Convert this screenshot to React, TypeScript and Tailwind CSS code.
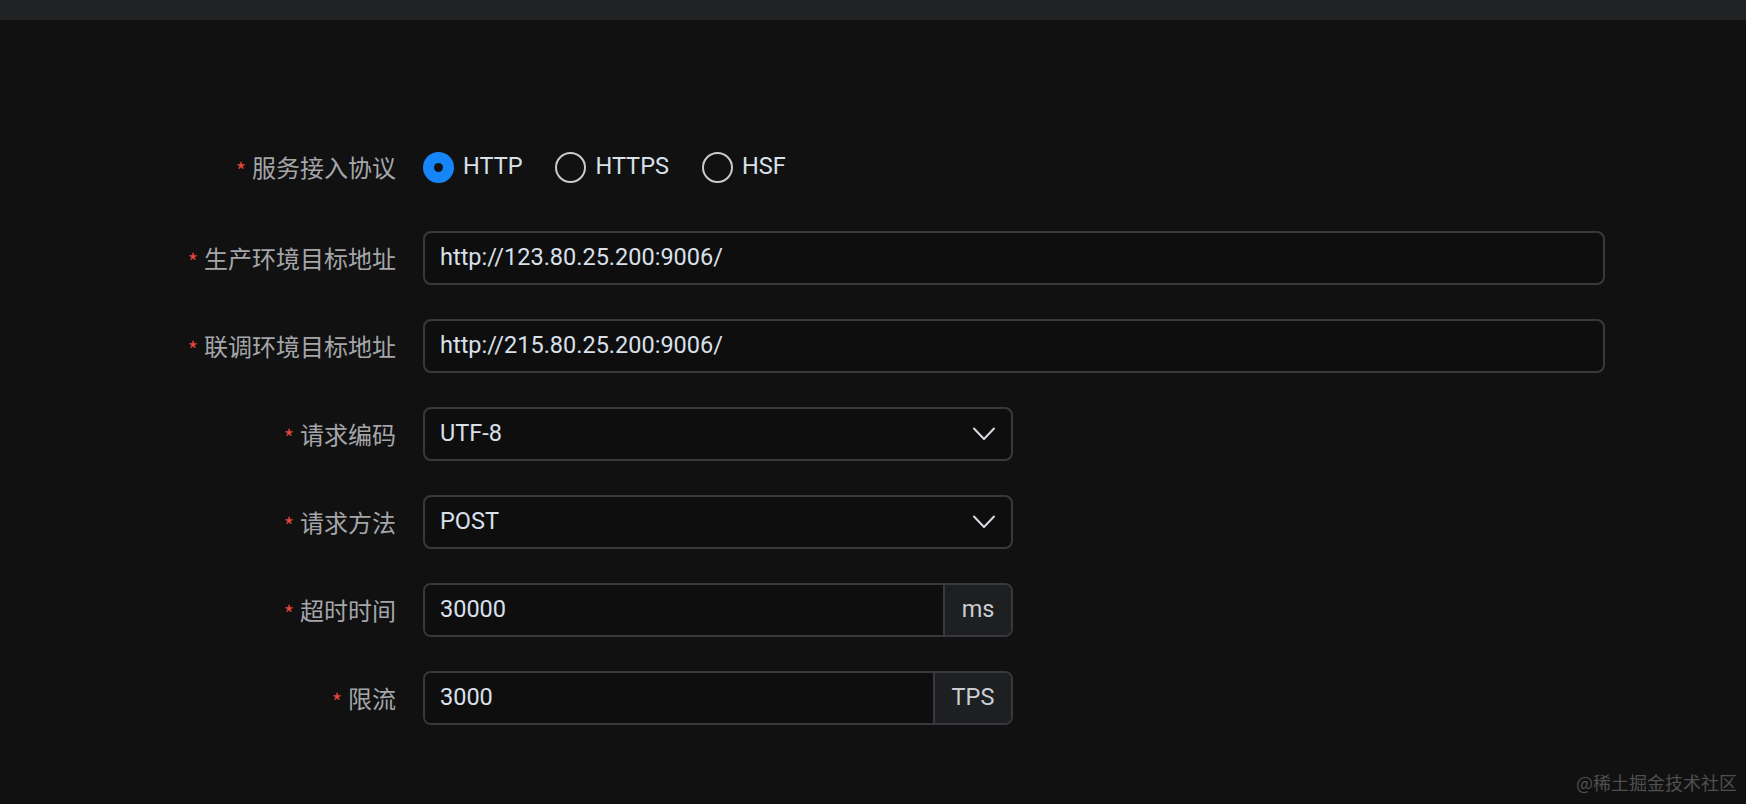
import { useState } from "react";

const cjk = "font-['Noto_Sans_CJK_SC','Noto_Sans',sans-serif]";
const latin = "font-['Roboto','Noto_Sans_CJK_SC',sans-serif]";

function Label({ text }: { text: string }) {
  return (
    <div className={`flex w-[396px] shrink-0 items-center justify-end ${cjk}`}>
      <span className="mr-[6px] mt-[3px] text-[22px] leading-none text-[#e2473d]">*</span>
      <span className="text-[24px] leading-none text-[#a4a6aa]">{text}</span>
    </div>
  );
}

function Radio({ label, checked, onClick }: { label: string; checked: boolean; onClick: () => void }) {
  return (
    <button type="button" onClick={onClick} className="flex items-center gap-[9px]">
      {checked ? (
        <span className="flex h-[31px] w-[31px] items-center justify-center rounded-full bg-[#1685f8]">
          <span className="h-[9px] w-[9px] rounded-full bg-[#111]" />
        </span>
      ) : (
        <span className="h-[31px] w-[31px] rounded-full border-2 border-[#c9cbcf]" />
      )}
      <span className={`text-[23.5px] text-[#d9e0ea] ${latin}`}>{label}</span>
    </button>
  );
}

function Field({ value, width }: { value: string; width: string }) {
  return (
    <div
      className={`flex h-[54px] ${width} items-center rounded-[8px] border-2 border-[#37393c] bg-[#0e0e0f] pl-[15px] ${latin} text-[23.5px] text-[#d9e0ea]`}
    >
      {value}
    </div>
  );
}

function SelectField({ value }: { value: string }) {
  return (
    <div
      className={`flex h-[54px] w-[590px] items-center justify-between rounded-[8px] border-2 border-[#37393c] bg-[#0e0e0f] pl-[15px] pr-[15px] ${latin} text-[23.5px] text-[#d9e0ea]`}
    >
      <span>{value}</span>
      <svg width="24" height="16" viewBox="0 0 24 16" fill="none">
        <path d="M2 2.5 L12 13 L22 2.5" stroke="#d4d8de" strokeWidth="2" strokeLinecap="round" strokeLinejoin="round" />
      </svg>
    </div>
  );
}

function AddonField({ value, unit, unitWidth }: { value: string; unit: string; unitWidth: string }) {
  return (
    <div className={`flex h-[54px] w-[590px] overflow-hidden rounded-[8px] border-2 border-[#37393c] ${latin} text-[23.5px]`}>
      <div className="flex flex-1 items-center bg-[#0e0e0f] pl-[15px] text-[#d9e0ea]">{value}</div>
      <div className={`flex ${unitWidth} items-center justify-center border-l-2 border-[#37393c] bg-[#1e1f21] text-[#c9cdd3]`}>
        {unit}
      </div>
    </div>
  );
}

export default function App() {
  const [protocol, setProtocol] = useState("HTTP");

  return (
    <div className="relative h-[804px] w-full overflow-hidden bg-[#111111]">
      <div className="h-[20px] bg-[#212224]" />

      <div className="pt-[120px]">
        <div className="flex h-[54px] items-center gap-[27px]">
          <Label text="服务接入协议" />
          <div className="flex items-center gap-[33px]">
            {["HTTP", "HTTPS", "HSF"].map((p) => (
              <Radio key={p} label={p} checked={protocol === p} onClick={() => setProtocol(p)} />
            ))}
          </div>
        </div>

        <div className="mt-[37px] flex flex-col gap-[34px]">
          <div className="flex items-center gap-[27px]">
            <Label text="生产环境目标地址" />
            <Field value="http://123.80.25.200:9006/" width="w-[1182px]" />
          </div>
          <div className="flex items-center gap-[27px]">
            <Label text="联调环境目标地址" />
            <Field value="http://215.80.25.200:9006/" width="w-[1182px]" />
          </div>
          <div className="flex items-center gap-[27px]">
            <Label text="请求编码" />
            <SelectField value="UTF-8" />
          </div>
          <div className="flex items-center gap-[27px]">
            <Label text="请求方法" />
            <SelectField value="POST" />
          </div>
          <div className="flex items-center gap-[27px]">
            <Label text="超时时间" />
            <AddonField value="30000" unit="ms" unitWidth="w-[68px]" />
          </div>
          <div className="flex items-center gap-[27px]">
            <Label text="限流" />
            <AddonField value="3000" unit="TPS" unitWidth="w-[78px]" />
          </div>
        </div>
      </div>

      <div className={`absolute bottom-[8px] right-[9px] text-[18px] text-[#4f4f50] ${cjk}`}>@稀土掘金技术社区</div>
    </div>
  );
}
